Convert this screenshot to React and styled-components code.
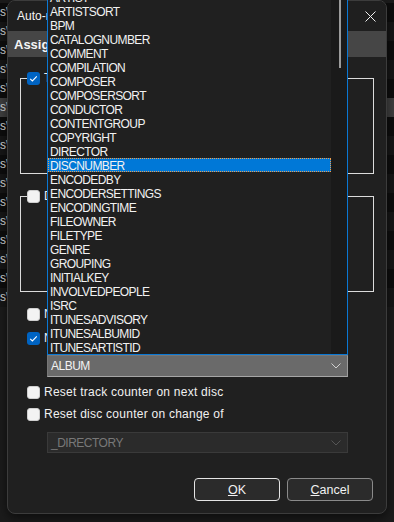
import React from "react";
import styled, { createGlobalStyle } from "styled-components";

const GlobalStyle = createGlobalStyle`
  html, body {
    margin: 0;
    padding: 0;
    background: #1a1a1a;
  }
  body {
    font-family: "Liberation Sans", Arial, sans-serif;
    font-size: 12px;
    color: #f2f2f2;
  }
  * {
    box-sizing: border-box;
  }
`;

const fields = [
  "ARTIST",
  "ARTISTSORT",
  "BPM",
  "CATALOGNUMBER",
  "COMMENT",
  "COMPILATION",
  "COMPOSER",
  "COMPOSERSORT",
  "CONDUCTOR",
  "CONTENTGROUP",
  "COPYRIGHT",
  "DIRECTOR",
  "DISCNUMBER",
  "ENCODEDBY",
  "ENCODERSETTINGS",
  "ENCODINGTIME",
  "FILEOWNER",
  "FILETYPE",
  "GENRE",
  "GROUPING",
  "INITIALKEY",
  "INVOLVEDPEOPLE",
  "ISRC",
  "ITUNESADVISORY",
  "ITUNESALBUMID",
  "ITUNESARTISTID",
];

const bgRows = Array.from({ length: 16 }, (_, i) => i);

const Check = ({ checked }) => (
  <CheckBox $checked={checked}>
    {checked && (
      <svg width="13" height="13" viewBox="0 0 13 13">
        <path d="M3.2 6.8 L5.4 9 L9.8 4.4" fill="none" stroke="#fff" strokeWidth="1.1" />
      </svg>
    )}
  </CheckBox>
);

const Chevron = ({ color }) => (
  <svg width="10" height="6" viewBox="0 0 10 6">
    <path d="M0.5 0.5 L5 5 L9.5 0.5" fill="none" stroke={color} strokeWidth="1" />
  </svg>
);

const App = () => {
  return (
    <>
      <GlobalStyle />
      <Desktop>
        <BgList>
          {bgRows.map((i) => (
            <BgRow key={i} $odd={i % 2 === 1} $selected={i === 5}>
              s\
            </BgRow>
          ))}
        </BgList>

        <Dialog>
          <TitleBar>
            <span>Auto-numbering Wizard</span>
            <CloseBtn>
              <svg width="11" height="11" viewBox="0 0 11 11">
                <path d="M0.5 0.5 L10.5 10.5 M10.5 0.5 L0.5 10.5" stroke="#f0f0f0" strokeWidth="1" />
              </svg>
            </CloseBtn>
          </TitleBar>
          <Header>Assign track and disc numbers</Header>
          <Body>
            <Group $mt={13}>
              <Legend>
                <Check checked />
                <Label>Track number</Label>
              </Legend>
              <GroupInner />
            </Group>
            <Group $mt={14}>
              <Legend>
                <Check />
                <Label>Disc number</Label>
              </Legend>
              <GroupInner />
            </Group>
            <OptionRow $mt={14}>
              <Check />
              <Label>Number discs by folder</Label>
            </OptionRow>
            <OptionRow $mt={8}>
              <Check checked />
              <Label>New disc on change of</Label>
            </OptionRow>
            <Combo $mt={9}>
              <span>ALBUM</span>
              <Chevron color="#d0d0d0" />
            </Combo>
            <OptionRow $mt={7}>
              <Check />
              <Label>Reset track counter on next disc</Label>
            </OptionRow>
            <OptionRow $mt={6}>
              <Check />
              <Label>Reset disc counter on change of</Label>
            </OptionRow>
            <Combo $mt={10} $disabled>
              <span>_DIRECTORY</span>
              <Chevron color="#555" />
            </Combo>
            <Buttons>
              <Button $default>
                <u>O</u>K
              </Button>
              <Button>
                <u>C</u>ancel
              </Button>
            </Buttons>
          </Body>
        </Dialog>

        <DropList>
          <Items>
            {fields.map((f) => (
              <Item key={f} $selected={f === "DISCNUMBER"}>
                {f}
              </Item>
            ))}
          </Items>
          <Track>
            <Thumb />
          </Track>
        </DropList>
      </Desktop>
    </>
  );
};

const Desktop = styled.div`
  position: relative;
  width: 394px;
  height: 522px;
  overflow: hidden;
  background: #1b1b1b;
`;

const BgList = styled.div`
  padding-top: 3px;
`;

const BgRow = styled.div`
  height: 19px;
  line-height: 19px;
  font-size: 12px;
  color: #d4d4d4;
  white-space: nowrap;
  background: ${(p) => (p.$selected ? "#3e3e3e" : p.$odd ? "#161616" : "#0d0d0d")};
`;

// the dialog window sits on top of the background app
const Dialog = styled.div`
  position: absolute;
  left: 7px;
  top: 0;
  width: 380px;
  height: 514px;
  display: flex;
  flex-direction: column;
  background: #202020;
  border: 1px solid #3c3c3c;
  border-radius: 8px;
  overflow: hidden;
  box-shadow: 0 4px 10px rgba(0, 0, 0, 0.5);
`;

const TitleBar = styled.div`
  height: 30px;
  display: flex;
  align-items: center;
  justify-content: space-between;
  padding-left: 9px;
  background: #1f1f1f;
  color: #f5f5f5;
  font-size: 12px;
`;

const CloseBtn = styled.div`
  display: flex;
  align-items: center;
  padding-right: 10px;
`;

const Header = styled.div`
  height: 26px;
  display: flex;
  align-items: center;
  padding-left: 6px;
  background: #464646;
  color: #f5f5f5;
  font-weight: bold;
  font-size: 13px;
`;

const Body = styled.div`
  flex: 1;
  display: flex;
  flex-direction: column;
  padding: 0 12px;
`;

const Group = styled.fieldset`
  margin: ${(p) => p.$mt}px 0 0;
  padding: 0;
  min-width: 0;
  border: 1px solid #dcdcdc;
`;

const Legend = styled.legend`
  display: flex;
  align-items: center;
  height: 16px;
  margin-left: 6px;
  padding: 0 2px 0 0;
`;

const GroupInner = styled.div`
  height: 87px;
`;

const CheckBox = styled.span`
  width: 13px;
  height: 13px;
  flex: none;
  display: flex;
  border-radius: 3px;
  background: ${(p) => (p.$checked ? "#0063c1" : "#f3f3f3")};
  border: ${(p) => (p.$checked ? "none" : "1px solid #cfcfcf")};
`;

const Label = styled.span`
  margin-left: 4px;
  color: #f0f0f0;
  letter-spacing: 0.25px;
  white-space: nowrap;
`;

const OptionRow = styled.div`
  display: flex;
  align-items: center;
  height: 16px;
  margin-top: ${(p) => p.$mt}px;
  padding-left: 7px;
`;

const Combo = styled.div`
  display: flex;
  align-items: center;
  justify-content: space-between;
  width: 301px;
  height: ${(p) => (p.$disabled ? 21 : 22)}px;
  margin: ${(p) => p.$mt}px 0 0 27px;
  padding: 0 6px 0 3px;
  letter-spacing: -0.5px;
  background: ${(p) => (p.$disabled ? "#2b2b2b" : "#6a6a6a")};
  color: ${(p) => (p.$disabled ? "#787878" : "#f2f2f2")};
  border: 1px solid ${(p) => (p.$disabled ? "#3a3a3a" : "#777")};
  border-bottom-color: ${(p) => (p.$disabled ? "#3a3a3a" : "#a6a6a6")};
  border-right-color: ${(p) => (p.$disabled ? "#3a3a3a" : "#9c9c9c")};
`;

const Buttons = styled.div`
  display: flex;
  justify-content: flex-end;
  gap: 7px;
  margin-top: 25px;
  padding-right: 1px;
`;

const Button = styled.div`
  width: 86px;
  height: 23px;
  display: flex;
  align-items: center;
  justify-content: center;
  border-radius: 4px;
  background: #2b2b2b;
  color: #f2f2f2;
  font-size: 12.5px;
  border: 1px solid ${(p) => (p.$default ? "#e4e4e4" : "#8a8a8a")};
`;

// combo dropdown popup, drawn above the dialog
const DropList = styled.div`
  position: absolute;
  left: 47px;
  top: -11px;
  width: 301px;
  height: 366px;
  display: flex;
  background: #202020;
  border: 1px solid #0a78d4;
`;

const Items = styled.div`
  flex: 1;
`;

const Item = styled.div`
  height: 14px;
  line-height: 16px;
  padding-left: 2px;
  font-size: 12px;
  letter-spacing: -0.6px;
  white-space: nowrap;
  color: #f2f2f2;
  background: ${(p) => (p.$selected ? "#0078d7" : "transparent")};
  outline: ${(p) => (p.$selected ? "1px dotted #f0a050" : "none")};
  outline-offset: -1px;
`;

const Track = styled.div`
  width: 16px;
  background: #1a1a1a;
`;

const Thumb = styled.div`
  width: 2px;
  height: 78px;
  margin-left: 8px;
  background: #9c9c9c;
`;

export default App;
